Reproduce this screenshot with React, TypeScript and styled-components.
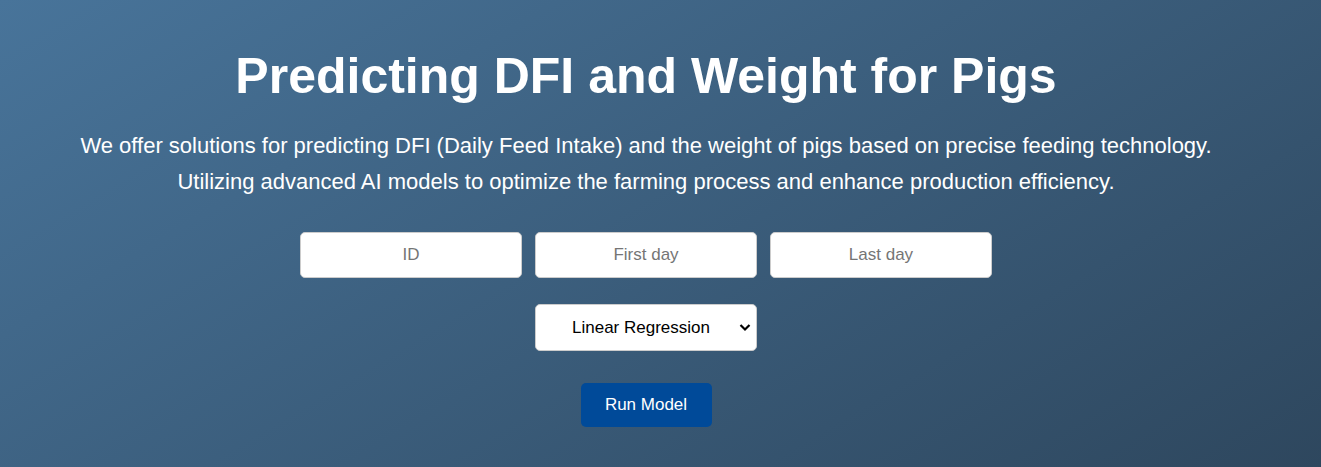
import React from "react";
import styled, { createGlobalStyle } from "styled-components";

const Global = createGlobalStyle`
  html, body { margin: 0; padding: 0; }
  body {
    font-family: "Liberation Sans", Arial, sans-serif;
    min-height: 467px;
    background: linear-gradient(149deg, #48749a, #2e475e);
    background-attachment: fixed;
  }
`;

const Page = styled.main`
  min-height: 467px;
  display: flex;
  flex-direction: column;
  align-items: center;
  color: #fff;
  text-align: center;
  padding: 46px 29px 0 0;
  box-sizing: border-box;
`;

const Title = styled.h1`
  margin: 0;
  font-size: 50px;
  font-weight: 700;
  line-height: 60px;
`;

const Lead = styled.p`
  margin: 22px 0 0;
  font-size: 22px;
  line-height: 36px;
`;

const Row = styled.div<{ $mt: number }>`
  display: flex;
  gap: 13px;
  justify-content: center;
  margin-top: ${(p) => p.$mt}px;
`;

const Field = styled.input`
  box-sizing: border-box;
  width: 222px;
  height: 46px;
  border: 1px solid #ccc;
  border-radius: 5px;
  background: #fff;
  font-family: "Liberation Sans", Arial, sans-serif;
  font-size: 17px;
  text-align: center;
  color: #333;
  &::placeholder { color: #757575; }
`;

const SelectWrap = styled.div`
  position: relative;
  width: 222px;
  height: 47px;
`;

const Select = styled.select`
  appearance: none;
  -webkit-appearance: none;
  box-sizing: border-box;
  width: 100%;
  height: 100%;
  border: 1px solid #ccc;
  border-radius: 5px;
  background: #fff;
  font-family: "Liberation Sans", Arial, sans-serif;
  font-size: 17px;
  color: #000;
  padding: 0 0 0 36px;
`;

const Chevron = styled.svg`
  position: absolute;
  right: 6px;
  top: 19px;
  width: 12px;
  height: 9px;
  pointer-events: none;
`;

const Button = styled.button`
  box-sizing: border-box;
  width: 131px;
  height: 44px;
  border: none;
  border-radius: 5px;
  background: #004a99;
  color: #fff;
  font-family: "Liberation Sans", Arial, sans-serif;
  font-size: 17px;
  cursor: pointer;
`;

export default function App() {
  return (
    <>
      <Global />
      <Page>
        <Title>Predicting DFI and Weight for Pigs</Title>
        <Lead>
          We offer solutions for predicting DFI (Daily Feed Intake) and the weight of pigs based on precise feeding technology.
          <br />
          Utilizing advanced AI models to optimize the farming process and enhance production efficiency.
        </Lead>
        <Row $mt={32}>
          <Field placeholder="ID" />
          <Field placeholder="First day" />
          <Field placeholder="Last day" />
        </Row>
        <Row $mt={26}>
          <SelectWrap>
            <Select defaultValue="lr">
              <option value="lr">Linear Regression</option>
              <option value="rf">Random Forest</option>
            </Select>
            <Chevron viewBox="0 0 12 9">
              <path d="M1.5 2 L6 6.5 L10.5 2" fill="none" stroke="#000" strokeWidth="2.2" />
            </Chevron>
          </SelectWrap>
        </Row>
        <Row $mt={32}>
          <Button>Run Model</Button>
        </Row>
      </Page>
    </>
  );
}
